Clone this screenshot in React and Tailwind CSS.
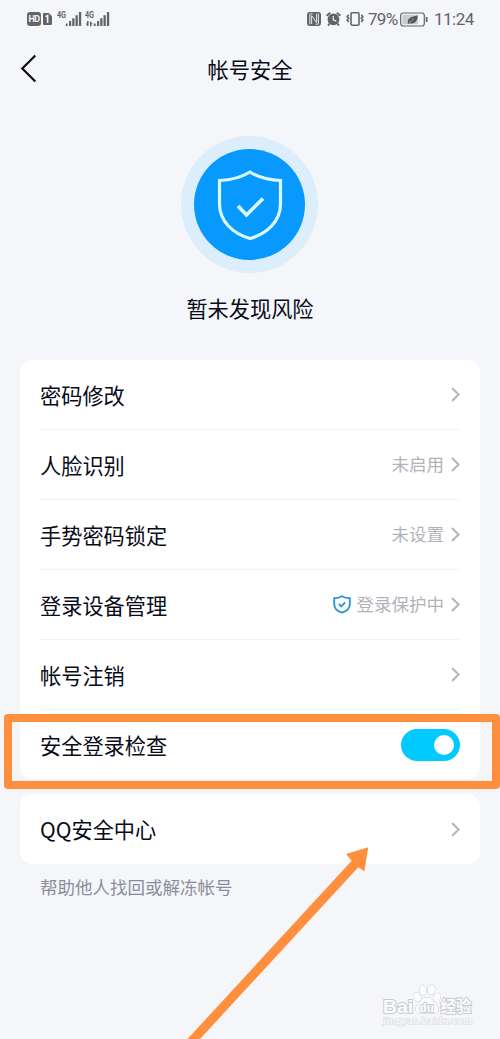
import { useState } from "react";

const rows = [
  { label: "密码修改" },
  { label: "人脸识别", value: "未启用" },
  { label: "手势密码锁定", value: "未设置" },
  { label: "登录设备管理", value: "登录保护中", shield: true },
  { label: "帐号注销" },
];

function Chevron() {
  return (
    <svg className="w-[9px] h-[15px] shrink-0" viewBox="0 0 9 15" fill="none" stroke="#b2b3ba" strokeWidth="1.9">
      <path d="M1 1 7.6 7.5 1 14" />
    </svg>
  );
}

function Signal({ data }) {
  return (
    <svg className="w-[26px] h-[16px]" viewBox="0 0 26 16" fill="#636468">
      <text x="0" y="7" fontSize="9" fontWeight="700" textLength="9" lengthAdjust="spacingAndGlyphs" fontFamily="Roboto">
        4G
      </text>
      {data && <path d="M2 10v2.500H.500L2.700 15.200 3.600 14V10zM5 15.200v-5.200l2.800 2.800H6.600v2.400z" />}
      <path d="M8.800 12.500h1.800V15H8.800zM12 10h2.200v5H12zM15.200 7.200h2.300V15h-2.300zM18.500 4.200h2.300V15h-2.300zM21.900 1h2.300v14h-2.300z" />
    </svg>
  );
}

function StatusBar() {
  return (
    <div className="h-[38px] pl-[27px] pr-[26px] flex items-center justify-between text-[#636468] font-[Roboto,sans-serif]">
      <div className="flex items-center">
        <div className="w-[14px] h-[14px] rounded-[3px] bg-[#636468] text-[#f4f6fa] text-[9px] font-bold leading-[14px] text-center tracking-[-0.5px]">
          HD
        </div>
        <svg className="w-[9px] h-[12px] ml-[2px] mr-[5px]" viewBox="0 0 9 12">
          <path d="M1 0h4.8L9 3.2V11a1 1 0 0 1-1 1H1a1 1 0 0 1-1-1V1a1 1 0 0 1 1-1z" fill="#636468" />
          <path d="M2.6 3.6 4.6 2.6V10" stroke="#f4f6fa" strokeWidth="1.6" fill="none" />
        </svg>
        <Signal />
        <div className="ml-[2px] flex">
          <Signal data />
        </div>
      </div>

      <div className="flex items-center">
        {/* nfc */}
        <svg className="w-[14px] h-[14px]" viewBox="0 0 14 14">
          <rect width="14" height="14" rx="3" fill="#636468" />
          <path d="M5.500 1.800H4Q2.800 1.800 2.800 3v9.400M4.600 3.500l5 7V1.600M4.600 4v8M11.400 1.600V11q0 1.200-1.200 1.200H8.500" fill="none" stroke="#f4f6fa" strokeWidth=".9" />
        </svg>
        {/* alarm */}
        <svg className="w-[15px] h-[14px] ml-[5px]" viewBox="0 0 15 14">
          <circle cx="7.5" cy="7.3" r="5.9" fill="#636468" />
          <path d="M.6 3.800 4.200.8M14.400 3.800 10.800.8M3.600 11.600 2 13.600M11.400 11.600l1.600 2" stroke="#636468" strokeWidth="1.8" />
          <path d="M7.200 4v3.800l3.200 1.400" fill="none" stroke="#f4f6fa" strokeWidth="1.1" />
        </svg>
        {/* vibrate */}
        <svg className="w-[18px] h-[14px] ml-[5px]" viewBox="0 0 18 14" fill="none" stroke="#636468">
          <rect x="5" y=".8" width="8" height="12.4" rx="1" strokeWidth="1.6" />
          <path d="M2.600 2.800 1.200 4.600l1.400 1.600L1.200 8l1.400 2M15.400 2.800l1.400 1.800-1.400 1.600L16.800 8l-1.400 2" strokeWidth="1.7" />
        </svg>
        <span className="w-[36px] pl-[4px] pt-[2px] text-[17px] tracking-[-0.7px] whitespace-nowrap">79%</span>
        {/* battery */}
        <svg className="w-[28px] h-[15px] mr-[6px]" viewBox="0 0 28 15">
          <rect x=".7" y="1" width="23.6" height="13" rx="2.5" fill="none" stroke="#636468" strokeWidth="1.2" />
          <rect x="2.5" y="2.8" width="15.5" height="9.4" rx="1" fill="#c9cbcf" />
          <path d="M26.6 5v5" stroke="#636468" strokeWidth="1.8" />
          <path d="M8 12C7 7 9.500 4.600 17.600 3.400C17.800 8 15.400 12.400 9.800 11.200z" fill="#55565a" />
          <path d="m9 11 5-4.500" stroke="#c9cbcf" strokeWidth=".7" />
        </svg>
        <span className="w-[40px] pt-[2px] text-[17px] tracking-[-0.5px] whitespace-nowrap">11:24</span>
      </div>
    </div>
  );
}

function Watermark() {
  return (
    <svg className="absolute left-[378px] top-[980px] w-[100px] h-[52px] [paint-order:stroke]" viewBox="0 0 100 52" fill="#fbfcfd" stroke="#c8cace" strokeWidth="1.8">
      <g strokeWidth="1">
        <ellipse cx="39.500" cy="17" rx="3.300" ry="4.600" transform="rotate(-20 39.500 17)" />
        <ellipse cx="45" cy="10" rx="3.600" ry="4.800" />
        <ellipse cx="53.300" cy="9.800" rx="3.600" ry="4.800" transform="rotate(10 53.300 9.800)" />
        <ellipse cx="59" cy="17.500" rx="3.300" ry="4.500" transform="rotate(25 59 17.500)" />
        <path d="M49 17.500c5 0 6 3.500 9 6.500 4 4 2.500 9.500-2.500 9.500h-13c-5.500 0-6-6-2.500-9.500 3-3 4-6.500 9-6.500z" />
      </g>
      <text x="5" y="32.500" fontSize="17.500" fontWeight="700" textLength="30" lengthAdjust="spacingAndGlyphs" fontFamily="Liberation Sans">
        Bai
      </text>
      <text x="41.500" y="31.500" fontSize="13" fontWeight="700" textLength="14.500" lengthAdjust="spacingAndGlyphs" fontFamily="Liberation Sans">
        du
      </text>
      <text x="62.500" y="32" fontSize="16" fontWeight="700" textLength="31" lengthAdjust="spacingAndGlyphs" fontFamily="Noto Sans CJK SC">
        经验
      </text>
      <text x="5" y="44" fontSize="10" strokeWidth="1.200" stroke="#dcdee2" textLength="89" lengthAdjust="spacingAndGlyphs" fontFamily="Liberation Serif">
        jingyan.baidu.com
      </text>
    </svg>
  );
}

function App() {
  const [checked, setChecked] = useState(true);

  return (
    <div className="relative w-[500px] h-[1039px] overflow-hidden bg-[#f4f6fa] text-[#080b18] font-['Noto_Sans_CJK_SC',sans-serif]">
      <StatusBar />

      <header className="relative h-[62px] flex items-center justify-center">
        <svg className="absolute left-[20px] top-[16px] w-[17px] h-[29px]" viewBox="0 0 17 29" fill="none" stroke="#0b0b10" strokeWidth="2.2">
          <path d="M15.300 1.500 2.300 14.500l13 13" />
        </svg>
        <h1 className="text-[21.200px]">帐号安全</h1>
      </header>

      <div className="mt-[36px] ml-[181px] w-[137px] h-[137px] rounded-full bg-[#dcedfb] flex items-center justify-center">
        <div className="w-[111px] h-[111px] rounded-full bg-[#0899ff] flex items-center justify-center">
          <svg className="w-[66px] h-[72px]" viewBox="0 0 66 72" fill="none" stroke="#d9fbff" strokeWidth="3.200">
            <path d="M33 3C24 8.500 14 11 2.500 11.500V35c0 17 13 29.500 30.500 34.500C50.500 64.500 63.500 52 63.500 35V11.500C52 11 42 8.500 33 3z" />
            <path d="m21 37 8.500 9L46 29.500" strokeWidth="3.600" />
          </svg>
        </div>
      </div>
      <p className="mt-[19px] h-[32px] leading-[32px] text-center text-[21.200px]">暂未发现风险</p>

      {/* settings */}
      <div className="mt-[36px] mx-[20px] h-[419px] px-[20px] rounded-xl bg-white">
        {rows.map((row) => (
          <div key={row.label} className="h-[70px] flex items-center border-b border-[#f1f2f5]">
            <span className="text-[21.200px]">{row.label}</span>
            <div className="ml-auto flex items-center">
              {row.shield && (
                <svg className="w-[18px] h-[19px] mr-[6px]" viewBox="0 0 18 19" fill="none" stroke="#2a97d6" strokeWidth="1.900">
                  <path d="M9 1.200C6.800 2.500 4.200 3.200 1.200 3.300V9c0 4.500 3.200 7.300 7.800 8.700 4.600-1.400 7.800-4.200 7.800-8.700V3.300C13.800 3.200 11.200 2.500 9 1.200z" />
                  <path d="m5.800 8.900 2.400 2.400 4-4" />
                </svg>
              )}
              {row.value && <span className="mr-[7px] text-[17.500px] text-[#b2b3ba]">{row.value}</span>}
              <Chevron />
            </div>
          </div>
        ))}
        <div className="h-[69px] flex items-center justify-between">
          <span className="text-[21.200px]">安全登录检查</span>
          <button
            onClick={() => setChecked(!checked)}
            className={`w-[59px] h-[32px] px-[6px] rounded-full flex items-center ${checked ? "justify-end bg-[#00caff]" : "justify-start bg-gray-300"}`}
          >
            <span className="w-[20px] h-[20px] rounded-full bg-white" />
          </button>
        </div>
      </div>

      <div className="mt-[15px] mx-[20px] h-[70px] px-[20px] rounded-xl bg-white flex items-center justify-between">
        <span className="text-[21.200px]">QQ安全中心</span>
        <Chevron />
      </div>
      <p className="mt-[10px] ml-[40px] leading-[26px] text-[17.500px] text-[#8b8e9a]">帮助他人找回或解冻帐号</p>

      <Watermark />

      {/* highlight and arrow */}
      <div className="absolute left-[4px] top-[714px] w-[496px] h-[75px] rounded-[4px] border-[8px] border-[#ff8f3d]" />
      <svg className="absolute left-[180px] top-[840px] w-[200px] h-[199px]" viewBox="180 840 200 199" fill="#ff8f3d">
        <path d="M368.300 847.300 346 854l5.700 6.800L187.500 1039h12.500L358.300 867.300l6 3.900z" />
      </svg>
    </div>
  );
}

export default App;
